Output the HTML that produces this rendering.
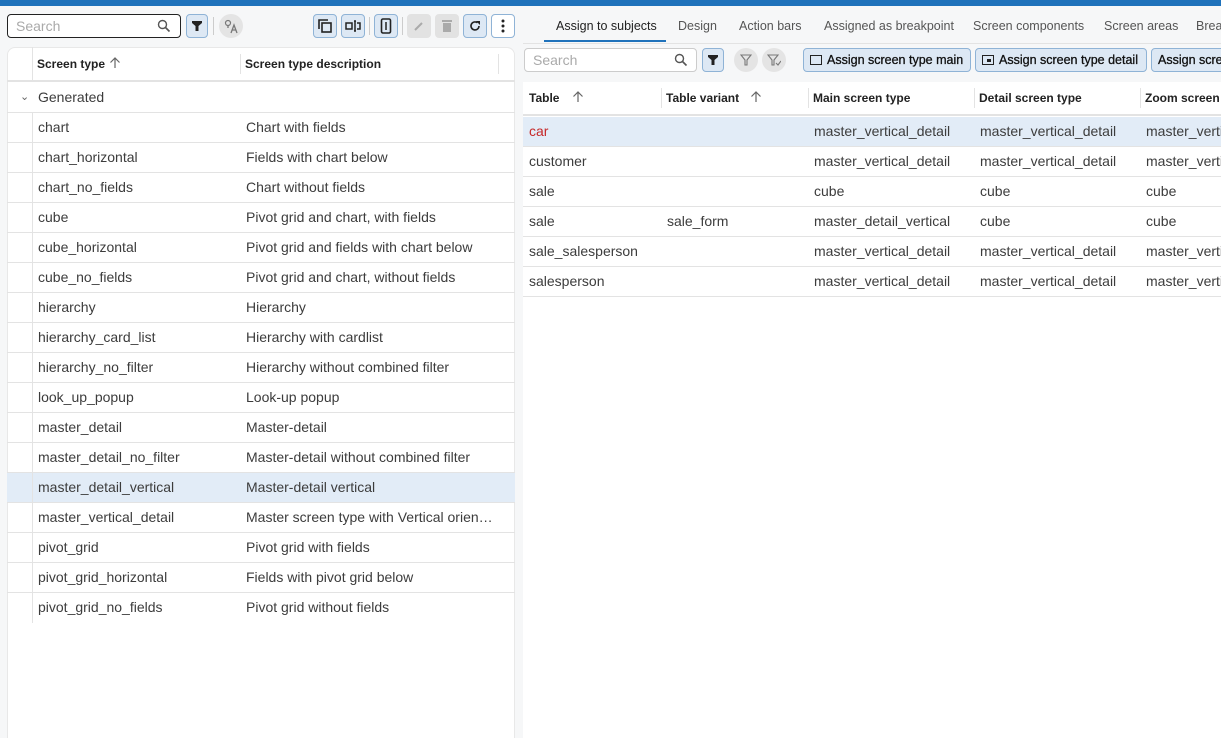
<!DOCTYPE html>
<html><head><meta charset="utf-8"><style>
*{box-sizing:border-box;margin:0;padding:0}
html,body{width:1221px;height:738px;overflow:hidden}
body{background:#f6f7f8;font-family:"Liberation Sans",sans-serif;color:#3c3c3c;position:relative}
.a{position:absolute}
.bar{left:0;top:0;width:1221px;height:6px;background:#1f72bb}
.search{border:1px solid #222;border-radius:4px;background:#fff;height:24px;font-size:14px;color:#aaa;padding:3px 8px}
.btn{width:22px;height:22px;border:1px solid #8fb3d6;background:#dde8f4;border-radius:4px;display:flex;align-items:center;justify-content:center}
.btn.g{background:#e2e2e2;border-color:#e2e2e2}
.btn.w{background:#fff}
.circ{width:24px;height:24px;border-radius:50%;background:#e4e4e4;display:flex;align-items:center;justify-content:center}
.sep{width:1px;height:18px;background:#ccc}
.row{position:absolute;height:30px;border-bottom:1px solid #e3e3e3;font-size:14px;line-height:29px}
.row span{position:absolute}
.hd{font-size:12px;font-weight:bold;color:#222}
.tab{font-size:12.5px;color:#555;top:19px}
.ab{height:24px;border:1px solid #8fb3d6;background:#dde8f4;border-radius:4px;font-size:12.5px;color:#111;padding:4px 6px;white-space:nowrap;display:flex;align-items:center;gap:5px;overflow:hidden;-webkit-text-stroke:0.3px #111}
#clip{position:absolute;left:0;top:0;width:1221px;height:738px;overflow:hidden}
</style></head><body><div id="clip">
<div class="a bar"></div>

<!-- left toolbar -->
<div class="a search" style="left:7px;top:14px;width:174px">Search</div>
<svg class="a" style="left:157px;top:19px" width="14" height="14" viewBox="0 0 14 14"><circle cx="5.5" cy="5.5" r="4" fill="none" stroke="#555" stroke-width="1.4"/><path d="M8.5 8.5L12.5 12.5" stroke="#555" stroke-width="1.6"/></svg>
<div class="a btn" style="left:186px;top:14px;width:22px;height:24px"><svg width="12" height="12" viewBox="0 0 12 12"><path d="M1 1h10v2L7.5 6v5h-3V6L1 3z" fill="#222"/></svg></div>
<div class="a sep" style="left:213px;top:17px"></div>
<div class="a circ" style="left:219px;top:14px"><svg width="16" height="16" viewBox="0 0 16 16"><circle cx="5" cy="5" r="2.5" fill="none" stroke="#777" stroke-width="1.2"/><path d="M5 8L5 10M8 15L11 7L14 15M9 12h4" fill="none" stroke="#777" stroke-width="1.3"/></svg></div>
<div class="a btn" style="left:313px;top:14px;width:24px;height:24px"><svg width="14" height="14" viewBox="0 0 14 14"><rect x="4" y="4" width="9" height="9" fill="none" stroke="#222" stroke-width="1.6"/><path d="M1 10V1h9" fill="none" stroke="#222" stroke-width="1.6"/></svg></div>
<div class="a btn" style="left:341px;top:14px;width:24px;height:24px"><svg width="16" height="12" viewBox="0 0 16 12"><path d="M1 3h6v6H1zM9 1h2M10 1v10M9 11h2M12 3h3v6h-3" fill="none" stroke="#222" stroke-width="1.5"/></svg></div>
<div class="a sep" style="left:369px;top:17px"></div>
<div class="a btn" style="left:374px;top:14px;width:24px;height:24px"><svg width="12" height="16" viewBox="0 0 12 16"><rect x="1.5" y="1" width="9" height="14" rx="1.5" fill="none" stroke="#222" stroke-width="1.6"/><path d="M6 4v8" stroke="#222" stroke-width="1.5"/></svg></div>
<div class="a sep" style="left:402px;top:17px"></div>
<div class="a btn g" style="left:407px;top:14px;width:24px;height:24px"><svg width="12" height="12"><path d="M2 10L9 3" stroke="#aaa" stroke-width="2"/></svg></div>
<div class="a btn g" style="left:435px;top:14px;width:24px;height:24px"><svg width="10" height="12"><rect x="1" y="3" width="8" height="9" fill="#aaa"/><rect x="0" y="0" width="10" height="2" fill="#aaa"/></svg></div>
<div class="a btn" style="left:463px;top:14px;width:24px;height:24px"><svg width="12" height="12" viewBox="0 0 12 12"><path d="M10 6A4 4 0 1 1 8.5 2.8" fill="none" stroke="#222" stroke-width="1.6"/><path d="M7 1h4v4z" fill="#222"/></svg></div>
<div class="a btn w" style="left:491px;top:14px;width:24px;height:24px"><svg width="4" height="14"><circle cx="2" cy="2" r="1.5" fill="#222"/><circle cx="2" cy="7" r="1.5" fill="#222"/><circle cx="2" cy="12" r="1.5" fill="#222"/></svg></div>

<!-- left panel -->
<div class="a" style="left:7px;top:47px;width:508px;height:700px;background:#fff;border:1px solid #e8e8e8;border-radius:8px"></div>
<div class="a" style="left:7px;top:47px;width:508px;height:35px;border-bottom:2px solid #e3e3e3"></div>
<div class="a" style="left:32px;top:47px;width:1px;height:33px;background:#e3e3e3"></div>
<div class="a" style="left:240px;top:54px;width:1px;height:20px;background:#e3e3e3"></div>
<div class="a" style="left:498px;top:54px;width:1px;height:20px;background:#e3e3e3"></div>
<div class="a hd" style="left:37px;top:57px">Screen type</div>
<svg class="a" style="left:109px;top:57px" width="12" height="12" viewBox="0 0 12 12"><path d="M6 11V1M1.5 5.5L6 1l4.5 4.5" fill="none" stroke="#666" stroke-width="1.2"/></svg>
<div class="a hd" style="left:245px;top:57px">Screen type description</div>
<div class="row" style="left:7px;top:83px;width:508px"><span style="left:13px;font-size:11px;color:#666">&#8964;</span><span style="left:31px">Generated</span></div>
<div id="L"></div>
<div class="a" style="left:32px;top:113px;width:1px;height:510px;background:#e3e3e3"></div>

<!-- tabs -->
<div class="a tab" style="left:556px;color:#222">Assign to subjects</div>
<div class="a" style="left:544px;top:40px;width:122px;height:2px;background:#1f72bb"></div>
<div class="a tab" style="left:678px">Design</div>
<div class="a tab" style="left:739px">Action bars</div>
<div class="a tab" style="left:824px">Assigned as breakpoint</div>
<div class="a tab" style="left:973px">Screen components</div>
<div class="a tab" style="left:1104px">Screen areas</div>
<div class="a tab" style="left:1196px">Breakpoints</div>
<div class="a" style="left:523px;top:43px;width:698px;height:1px;background:#e3e3e3"></div>

<div class="a search" style="left:524px;top:48px;width:173px;border-color:#ccc">Search</div>
<svg class="a" style="left:674px;top:53px" width="14" height="14" viewBox="0 0 14 14"><circle cx="5.5" cy="5.5" r="4" fill="none" stroke="#555" stroke-width="1.4"/><path d="M8.5 8.5L12.5 12.5" stroke="#555" stroke-width="1.6"/></svg>
<div class="a btn" style="left:702px;top:48px;width:22px;height:24px"><svg width="12" height="12" viewBox="0 0 12 12"><path d="M1 1h10v2L7.5 6v5h-3V6L1 3z" fill="#222"/></svg></div>
<div class="a circ" style="left:734px;top:48px"><svg width="12" height="12" viewBox="0 0 12 12"><path d="M1 1h10L7 6v5H5V6z" fill="none" stroke="#777" stroke-width="1.1"/></svg></div>
<div class="a circ" style="left:762px;top:48px"><svg width="14" height="13" viewBox="0 0 14 13"><path d="M1 1h10L7 6v5H5V6z M9 9l2 2 3-4" fill="none" stroke="#777" stroke-width="1.1"/></svg></div>
<div class="a ab" style="left:803px;top:48px;width:168px"><svg width="12" height="10"><rect x="0.5" y="0.5" width="11" height="9" fill="none" stroke="#222"/></svg>Assign screen type main</div>
<div class="a ab" style="left:975px;top:48px;width:172px"><svg width="12" height="10"><rect x="0.5" y="0.5" width="11" height="9" fill="none" stroke="#222"/><rect x="5" y="4" width="4" height="3" fill="#222"/></svg>Assign screen type detail</div>
<div class="a ab" style="left:1151px;top:48px;width:80px">Assign screen type zoom</div>

<!-- right table -->
<div class="a" style="left:523px;top:82px;width:698px;height:660px;background:#fff"></div>
<div class="a" style="left:523px;top:82px;width:698px;height:34px;border-bottom:2px solid #e3e3e3"></div>
<div class="a hd" style="left:529px;top:91px">Table</div>
<svg class="a" style="left:572px;top:91px" width="12" height="12" viewBox="0 0 12 12"><path d="M6 11V1M1.5 5.5L6 1l4.5 4.5" fill="none" stroke="#666" stroke-width="1.2"/></svg>
<div class="a" style="left:661px;top:88px;width:1px;height:20px;background:#e3e3e3"></div>
<div class="a hd" style="left:666px;top:91px">Table variant</div>
<svg class="a" style="left:750px;top:91px" width="12" height="12" viewBox="0 0 12 12"><path d="M6 11V1M1.5 5.5L6 1l4.5 4.5" fill="none" stroke="#666" stroke-width="1.2"/></svg>
<div class="a" style="left:808px;top:88px;width:1px;height:20px;background:#e3e3e3"></div>
<div class="a hd" style="left:813px;top:91px">Main screen type</div>
<div class="a" style="left:974px;top:88px;width:1px;height:20px;background:#e3e3e3"></div>
<div class="a hd" style="left:979px;top:91px">Detail screen type</div>
<div class="a" style="left:1140px;top:88px;width:1px;height:20px;background:#e3e3e3"></div>
<div class="a hd" style="left:1145px;top:91px;white-space:nowrap">Zoom screen type</div>
<div id="R"></div>
</div>
<script>
var L=[["chart","Chart with fields"],["chart_horizontal","Fields with chart below"],["chart_no_fields","Chart without fields"],["cube","Pivot grid and chart, with fields"],["cube_horizontal","Pivot grid and fields with chart below"],["cube_no_fields","Pivot grid and chart, without fields"],["hierarchy","Hierarchy"],["hierarchy_card_list","Hierarchy with cardlist"],["hierarchy_no_filter","Hierarchy without combined filter"],["look_up_popup","Look-up popup"],["master_detail","Master-detail"],["master_detail_no_filter","Master-detail without combined filter"],["master_detail_vertical","Master-detail vertical"],["master_vertical_detail","Master screen type with Vertical orien…"],["pivot_grid","Pivot grid with fields"],["pivot_grid_horizontal","Fields with pivot grid below"],["pivot_grid_no_fields","Pivot grid without fields"]];
var h="";L.forEach(function(r,i){var bg=i==12?"background:#e2ecf7;":"";h+='<div class="row" style="left:7px;top:'+(113+i*30)+'px;width:508px;'+bg+(i==16?'border-bottom:none':'')+'"><span style="left:31px">'+r[0]+'</span><span style="left:239px">'+r[1]+'</span></div>';});
document.getElementById("L").outerHTML=h;
var mv="master_vertical_detail",md="master_detail_vertical";
var R=[["car","",mv,mv,mv],["customer","",mv,mv,mv],["sale","","cube","cube","cube"],["sale","sale_form",md,"cube","cube"],["sale_salesperson","",mv,mv,mv],["salesperson","",mv,mv,mv]];
h="";R.forEach(function(r,i){var bg=i==0?"background:#e2ecf7;":"";h+='<div class="row" style="left:523px;top:'+(117+i*30)+'px;width:698px;overflow:hidden;white-space:nowrap;'+bg+'"><span style="left:6px;'+(i==0?'color:#c62828':'')+'">'+r[0]+'</span><span style="left:144px">'+r[1]+'</span><span style="left:291px">'+r[2]+'</span><span style="left:457px">'+r[3]+'</span><span style="left:623px">'+r[4]+'</span></div>';});
document.getElementById("R").outerHTML=h;
</script>
</body></html>
